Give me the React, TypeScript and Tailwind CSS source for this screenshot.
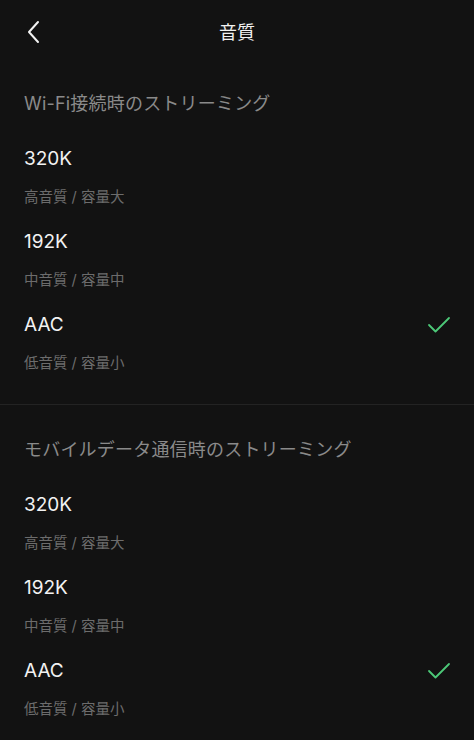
const options = [
	{ label: "320K", desc: "高音質 / 容量大", selected: false },
	{ label: "192K", desc: "中音質 / 容量中", selected: false },
	{ label: "AAC", desc: "低音質 / 容量小", selected: true },
]

const fontStack = {
	fontFamily: '"Inter", "Noto Sans CJK JP", sans-serif',
}

function Check() {
	return (
		<svg width="24" height="18" viewBox="0 0 24 18" fill="none">
			<path d="M2 9 L8.5 15.5 L22 2" stroke="#4cc878" strokeWidth="1.8" strokeLinecap="round" strokeLinejoin="round" />
		</svg>
	)
}

function Section({ title, top, gap }: { title: string; top: string; gap: string }) {
	return (
		<section className={`px-6 ${top}`}>
			<h2 className="h-6 text-[18px] leading-6 text-[#8a8a8a] tracking-[0.2px]">{title}</h2>
			<div className={gap}>
				{options.map((opt) => (
					<div key={opt.label} className="pb-[23px]">
						<div className="flex h-6 items-center justify-between">
							<span className="text-[19px] leading-6 text-[#f2f2f2]">{opt.label}</span>
							{opt.selected && (
								<span className="-mr-[1px]">
									<Check />
								</span>
							)}
						</div>
						<div className="mt-4 h-5 text-[14.5px] leading-5 text-[#6c6c6c]">{opt.desc}</div>
					</div>
				))}
			</div>
		</section>
	)
}

export default function App() {
	return (
		<div className="min-h-[740px] w-full bg-[#121212]" style={fontStack}>
			<header className="relative flex h-16 items-center justify-center">
				<button type="button" className="absolute left-[26px] top-[20px] p-0">
					<svg width="16" height="24" viewBox="0 0 16 24" fill="none">
						<path d="M12 2 L3 12 L12 22" stroke="#f2f2f2" strokeWidth="2" strokeLinecap="round" strokeLinejoin="round" />
					</svg>
				</button>
				<h1 className="text-[18px] text-[#f2f2f2]">音質</h1>
			</header>
			<Section title="Wi-Fi接続時のストリーミング" top="pt-[28px]" gap="pt-[31px]" />
			<div className="mt-[8px] h-px bg-[#232323]" />
			<Section title="モバイルデータ通信時のストリーミング" top="pt-[33px]" gap="pt-[31px]" />
		</div>
	)
}
